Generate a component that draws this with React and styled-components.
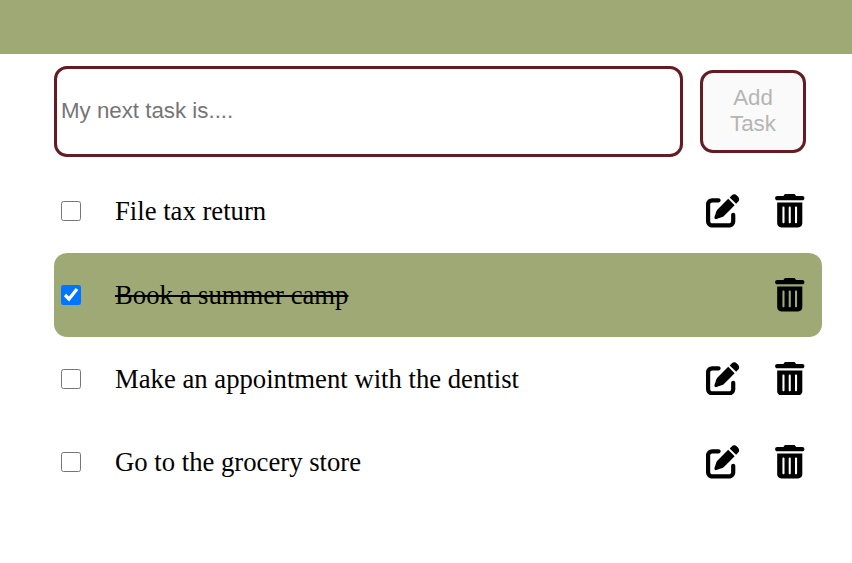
import React, { useState } from "react";
import styled, { createGlobalStyle } from "styled-components";
import { FaPenToSquare, FaTrashCan } from "react-icons/fa6";

const GlobalStyle = createGlobalStyle`
  *, *::before, *::after { box-sizing: border-box; }
  body {
    margin: 0;
    background: #ffffff;
    color: #000000;
    font-family: "Liberation Serif", "Times New Roman", serif;
  }
`;

const Banner = styled.header`
  height: 54px;
  background: #9fa975;
`;

const Main = styled.main`
  padding: 12px 30px 0 54px;
`;

const TaskForm = styled.form`
  display: flex;
  align-items: center;
  gap: 17px;
  height: 91px;
`;

const TaskInput = styled.input`
  width: 629px;
  height: 91px;
  padding: 0 4px 2px;
  border: 3px solid #641c21;
  border-radius: 13px;
  background: #ffffff;
  outline: none;
  font-family: "Liberation Sans", Arial, sans-serif;
  font-size: 22.3px;

  &::placeholder { color: #757575; }
`;

const AddButton = styled.button`
  width: 106px;
  height: 83px;
  padding: 0 24px 2px;
  border: 3px solid #641c21;
  border-radius: 13px;
  background: #fafafa;
  color: #000000;
  font-family: "Liberation Sans", Arial, sans-serif;
  font-size: 22.3px;
  line-height: 26px;

  &:disabled { color: #b5b5b5; }
`;

const TaskList = styled.ul`
  margin: 12.4px 0 0;
  padding: 0;
  list-style: none;
`;

const TaskRow = styled.li`
  display: flex;
  align-items: center;
  height: 83.67px;
  padding: 0 16px 0 7px;
  border-radius: 13px;
  background: ${({ $done }) => ($done ? "#9fa975" : "transparent")};
`;

const Checkbox = styled.input`
  width: 20px;
  height: 20px;
  margin: 0 34px 0 0;
  accent-color: #0075ff;
`;

const TaskLabel = styled.span`
  flex: 1;
  font-size: 26.7px;
  line-height: 30px;
  white-space: nowrap;
  text-decoration: ${({ $done }) => ($done ? "line-through" : "none")};
`;

const Actions = styled.div`
  display: flex;
  align-items: center;
  gap: 33px;
`;

const IconButton = styled.button`
  display: flex;
  padding: 0;
  border: 0;
  background: none;
  color: #000000;
  font-size: 33.5px;

  svg { width: auto; height: 33.5px; }
`;

const initialTasks = [
  { id: 1, text: "File tax return", done: false },
  { id: 2, text: "Book a summer camp", done: true },
  { id: 3, text: "Make an appointment with the dentist", done: false },
  { id: 4, text: "Go to the grocery store", done: false },
];

export default function App() {
  const [tasks, setTasks] = useState(initialTasks);
  const [draft, setDraft] = useState("");

  const addTask = (event) => {
    event.preventDefault();
    if (!draft.trim()) return;
    setTasks([...tasks, { id: Date.now(), text: draft.trim(), done: false }]);
    setDraft("");
  };

  const toggleTask = (id) =>
    setTasks(tasks.map((task) => (task.id === id ? { ...task, done: !task.done } : task)));

  const removeTask = (id) => setTasks(tasks.filter((task) => task.id !== id));

  const editTask = (task) => {
    setDraft(task.text);
    removeTask(task.id);
  };

  return (
    <>
      <GlobalStyle />
      <Banner />
      <Main>
        <TaskForm onSubmit={addTask}>
          <TaskInput
            placeholder="My next task is...."
            value={draft}
            onChange={(event) => setDraft(event.target.value)}
          />
          <AddButton type="submit" disabled={!draft.trim()}>Add Task</AddButton>
        </TaskForm>
        <TaskList>
          {tasks.map((task) => (
            <TaskRow key={task.id} $done={task.done}>
              <Checkbox type="checkbox" checked={task.done} onChange={() => toggleTask(task.id)} />
              <TaskLabel $done={task.done}>{task.text}</TaskLabel>
              <Actions>
                {!task.done && (
                  <IconButton type="button" onClick={() => editTask(task)}>
                    <FaPenToSquare />
                  </IconButton>
                )}
                <IconButton type="button" onClick={() => removeTask(task.id)}>
                  <FaTrashCan />
                </IconButton>
              </Actions>
            </TaskRow>
          ))}
        </TaskList>
      </Main>
    </>
  );
}
